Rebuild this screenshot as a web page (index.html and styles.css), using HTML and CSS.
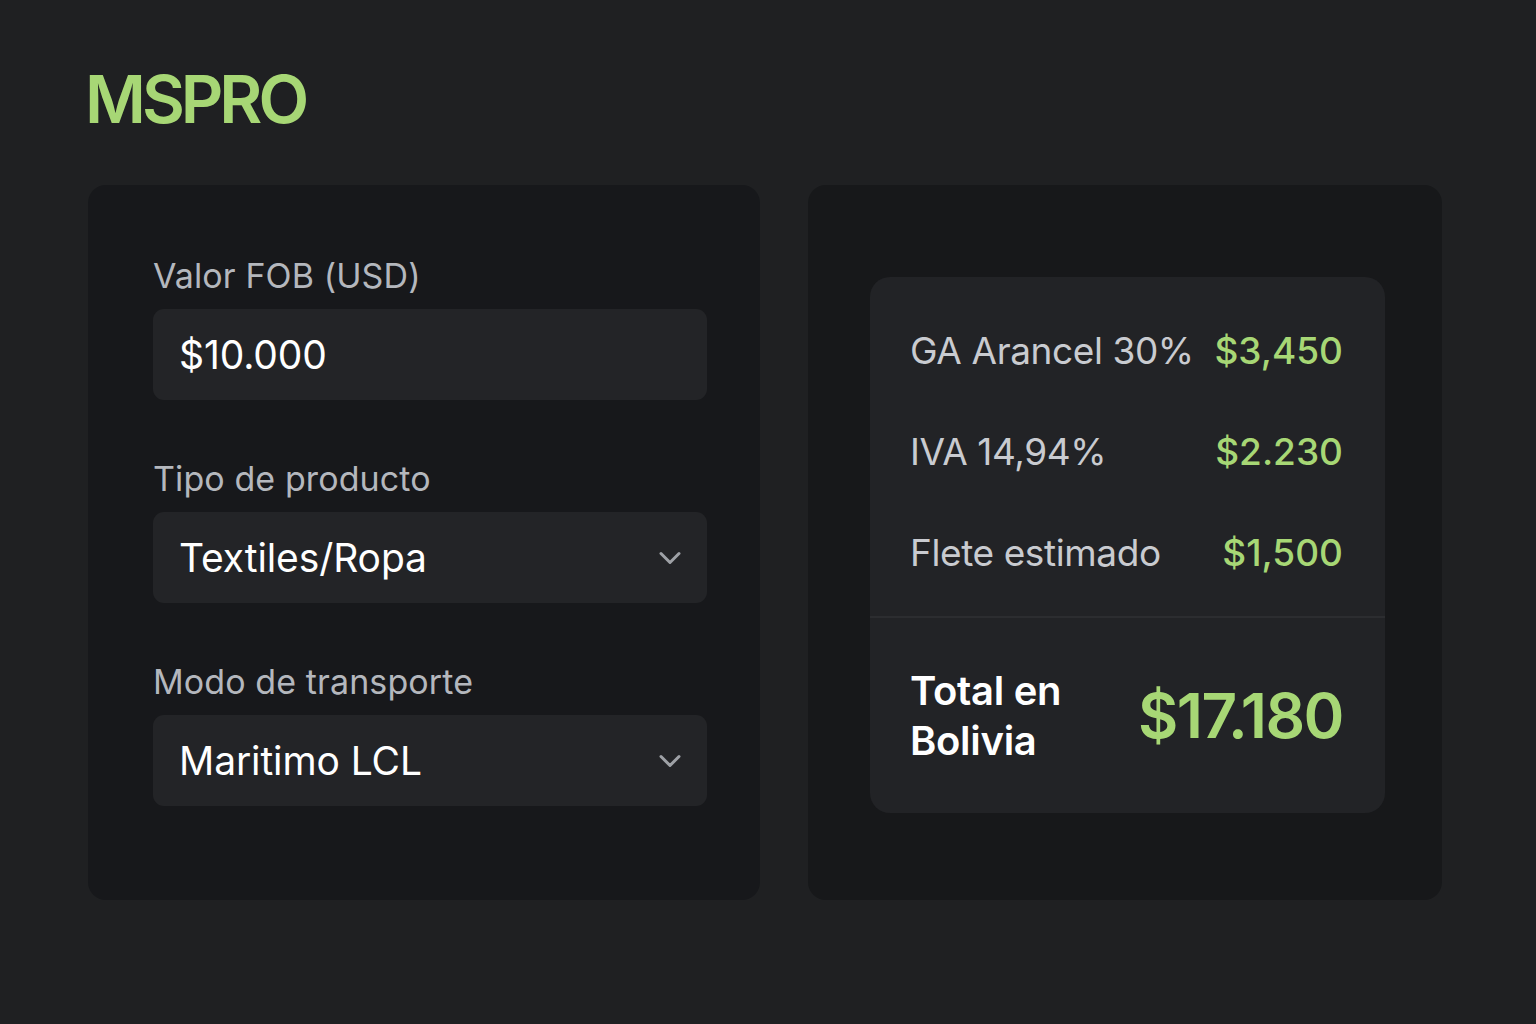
FILE: index.html
```html
<!DOCTYPE html>
<html lang="es">
<head>
<meta charset="utf-8">
<title>MSPRO</title>
<link rel="stylesheet" href="styles.css">
</head>
<body>
<main class="page">
  <h1 class="brand">MSPRO</h1>
  <div class="cards">
    <section class="card form-card">
      <div class="field">
        <div class="label">Valor FOB (USD)</div>
        <div class="control"><span class="control-text">$10.000</span></div>
      </div>
      <div class="field">
        <div class="label">Tipo de producto</div>
        <div class="control select"><span class="control-text">Textiles/Ropa</span>
          <svg class="chev" width="22" height="14" viewBox="0 0 22 14"><polyline points="2,2.5 11,11.5 20,2.5" fill="none" stroke="#9ea1a6" stroke-width="3" stroke-linecap="round" stroke-linejoin="round"/></svg>
        </div>
      </div>
      <div class="field">
        <div class="label">Modo de transporte</div>
        <div class="control select"><span class="control-text">Maritimo LCL</span>
          <svg class="chev" width="22" height="14" viewBox="0 0 22 14"><polyline points="2,2.5 11,11.5 20,2.5" fill="none" stroke="#9ea1a6" stroke-width="3" stroke-linecap="round" stroke-linejoin="round"/></svg>
        </div>
      </div>
    </section>
    <section class="card result-card">
      <div class="summary">
        <div class="rows">
          <div class="row"><span class="row-label">GA Arancel 30%</span><span class="row-value">$3,450</span></div>
          <div class="row"><span class="row-label">IVA 14,94%</span><span class="row-value">$2.230</span></div>
          <div class="row"><span class="row-label">Flete estimado</span><span class="row-value">$1,500</span></div>
        </div>
        <div class="total">
          <div class="total-label">Total en<br>Bolivia</div>
          <div class="total-value">$17.180</div>
        </div>
      </div>
    </section>
  </div>
</main>
</body>
</html>
```
FILE: styles.css
```css
* { box-sizing: border-box; }
html, body {
  margin: 0;
  padding: 0;
  background: #1f2022;
  font-family: Inter, "Noto Sans", "Liberation Sans", sans-serif;
  -webkit-font-smoothing: antialiased;
}
.page {
  width: 1536px;
  height: 1024px;
  padding: 59px 0 0 88px;
  background: #1f2022;
}
.brand {
  margin: 0 0 0 -3px;
  font-size: 66px;
  line-height: 80px;
  font-weight: 600;
  letter-spacing: -4px;
  color: #a7d775;
}
.cards {
  display: flex;
  gap: 48px;
  margin-top: 46px;
}
.card {
  height: 715px;
  border-radius: 18px;
}
.form-card {
  width: 672px;
  background: #17181b;
  padding: 71px 53px 0 65px;
  display: flex;
  flex-direction: column;
  gap: 59px;
}
.field {
  display: flex;
  flex-direction: column;
  gap: 13px;
}
.label {
  font-size: 34px;
  line-height: 40px;
  color: #b4b7bd;
  font-weight: 400;
  letter-spacing: 0.1px;
}
.control {
  height: 91px;
  border-radius: 11px;
  background: #232427;
  display: flex;
  align-items: center;
  justify-content: space-between;
  padding: 0 26px 0 26px;
}
.control-text {
  font-size: 39px;
  color: #ffffff;
  font-weight: 400;
  letter-spacing: -0.1px;
}
.chev { display: block; }
.result-card {
  width: 634px;
  background: #17181a;
  padding: 92px 57px 0 62px;
}
.summary {
  height: 536px;
  border-radius: 20px;
  background: #222326;
  display: flex;
  flex-direction: column;
}
.rows {
  padding: 23px 42px 13px 40px;
  border-bottom: 2px solid #2c2d30;
}
.row {
  height: 101px;
  display: flex;
  align-items: center;
  justify-content: space-between;
}
.row-label {
  font-size: 37px;
  color: #c9cbd0;
  font-weight: 400;
  letter-spacing: -0.4px;
}
.row-value {
  font-size: 37px;
  color: #a7d775;
  font-weight: 500;
}
.total {
  flex: 1;
  display: flex;
  align-items: center;
  justify-content: space-between;
  padding: 0 42px 0 40px;
}
.total-label {
  font-size: 40px;
  line-height: 50px;
  font-weight: 600;
  color: #ffffff;
  letter-spacing: -0.3px;
}
.total-value {
  font-size: 62px;
  line-height: 64px;
  font-weight: 600;
  color: #a7d775;
  letter-spacing: -1.5px;
}
```
